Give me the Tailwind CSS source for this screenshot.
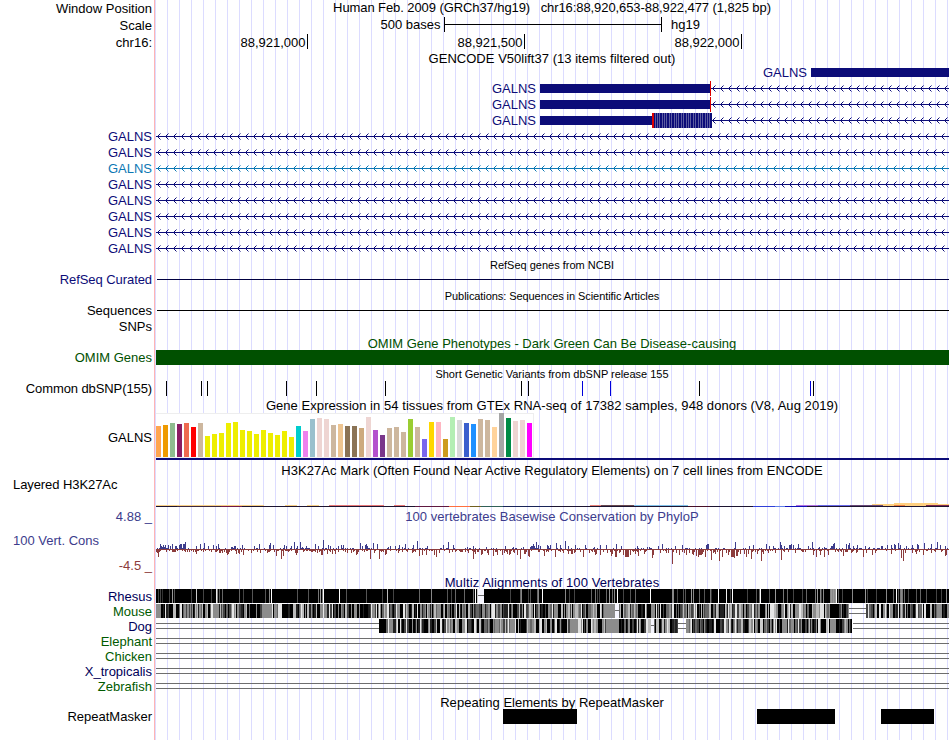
<!DOCTYPE html>
<html lang="en">
<head>
<meta charset="utf-8">
<title>chr16:88,920,653-88,922,477 - Genome Browser</title>
<meta name="viewport" content="width=device-width, initial-scale=1.0">
<script src="https://cdn.jsdelivr.net/npm/@tailwindcss/browser@4"></script>
<script>
const NAVY = "#0c0c78";
const LEFT = 156;
const RIGHT = 949;

// GTEx tissues: [colour, bar height]
const tissues = [
  ["#ffa54f", 31], ["#ee9a00", 32], ["#8fbc8f", 34], ["#8b1c62", 33], ["#ee6a50", 34], ["#ff0000", 30],
  ["#cdb79e", 34], ["#eeee00", 21], ["#eeee00", 23], ["#eeee00", 24], ["#eeee00", 34], ["#eeee00", 35],
  ["#eeee00", 27], ["#eeee00", 26], ["#eeee00", 23], ["#eeee00", 27], ["#eeee00", 24], ["#eeee00", 22],
  ["#eeee00", 26], ["#eeee00", 20], ["#00cdcd", 31], ["#ee82ee", 26], ["#9ac0cd", 38], ["#eed5d2", 39],
  ["#eed5d2", 38], ["#cdb79e", 32], ["#eec591", 33], ["#8b7355", 31], ["#8b7355", 31], ["#cdaa7d", 29],
  ["#eed5d2", 40], ["#b452cd", 27], ["#7a378b", 22], ["#cdb79e", 29], ["#cdb79e", 30], ["#cdb79e", 25],
  ["#9acd32", 38], ["#cdb79e", 30], ["#7a67ee", 18], ["#ffd700", 35], ["#ffb6c1", 35], ["#cd9b1d", 18],
  ["#b4eeb4", 40], ["#d9d9d9", 37], ["#3a5fcd", 34], ["#1e90ff", 33], ["#cdb79e", 38], ["#cdb79e", 37],
  ["#ffd39b", 30], ["#a6a6a6", 44], ["#008b45", 39], ["#eed5d2", 36], ["#eed5d2", 37], ["#ff00ff", 34],
];

// Layered H3K27Ac: [start, end, row, colour]
const h3k27ac = [
  [156, 949, 506, "#1c1430"], [177, 221, 506, "#3c2840"], [221, 242, 506, "#701848"],
  [156, 264, 505, "#f8d088"], [285, 297, 505, "#f8d088"], [307, 319, 505, "#f8d088"],
  [329, 384, 505, "#e87878"], [394, 405, 505, "#e87878"], [415, 449, 506, "#601840"],
  [449, 470, 506, "#ff7040"], [470, 481, 506, "#706020"], [481, 503, 506, "#306058"],
  [503, 550, 506, "#182458"], [590, 601, 505, "#e88078"], [601, 634, 505, "#684850"],
  [634, 688, 505, "#80c0e8"], [688, 710, 506, "#481028"], [753, 775, 506, "#3040d8"],
  [775, 785, 506, "#6080e8"], [785, 807, 506, "#1010b8"], [796, 818, 505, "#b070e0"],
  [818, 850, 505, "#6868e8"], [850, 883, 505, "#684878"], [872, 949, 504, "#ffd080"],
  [883, 949, 505, "#ffd080"], [894, 938, 503, "#ffd080"], [894, 905, 505, "#f08040"],
  [926, 949, 505, "#802850"],
];

// PhyloP scores per tile: offsets are in thirds of a pixel, then the bar height
const phylop = [
  { start: 140,
    up: "61:5 64:3 67:2 70:4 73:2 76:4 85:4 91:3 97:5 106:3 109:3 118:4 121:5 124:5 130:5 133:5 136:7 169:3 181:5 193:6 205:3 220:4 229:3 235:5 274:2 277:2 283:3 286:3 307:4 343:3 358:5 388:4 391:6 400:4 433:4 439:3 454:3 463:7 472:3 481:7 487:2 499:3 526:5 535:3 550:9 565:4 571:3 595:3 604:4 610:4 661:6 667:3 676:4 679:5 682:3 700:6 712:5 745:2 751:3 766:3 778:4 787:2 796:5",
    down: "52:4 55:8 58:3 79:3 88:2 103:3 112:2 127:2 142:3 148:3 154:2 160:3 169:5 175:2 190:3 208:2 214:3 226:3 239:4 242:4 247:4 253:3 259:4 262:6 265:5 268:3 289:5 295:4 298:5 304:3 310:6 325:2 334:4 352:3 361:4 382:4 388:3 409:7 424:10 430:7 445:3 454:2 466:4 469:6 472:4 490:3 502:2 508:2 514:3 532:4 538:3 544:6 547:6 562:5 571:3 577:5 586:5 595:3 616:3 622:4 634:4 640:3 649:6 652:5 655:3 673:3 691:10 703:4 718:10 724:3 736:6 739:5 775:4 787:3 802:3" },
  { start: 410,
    up: "10:4 22:8 52:3 100:4 115:7 130:4 172:2 190:3 229:2 286:3 310:2 340:2 361:2 364:3 367:3 370:5 373:3 379:7 385:4 391:3 412:4 415:3 421:4 439:6 451:4 466:8 475:3 496:4 526:4 553:2 571:4 589:4 619:5 634:3 682:3 712:2 718:2 745:3 757:5 796:3",
    down: "7:4 28:7 37:6 49:6 58:2 73:6 79:8 88:4 118:4 136:3 154:3 166:3 175:4 190:10 196:5 214:6 217:5 232:4 235:6 250:7 259:3 262:6 277:6 283:4 292:5 298:6 301:5 313:4 322:6 331:10 343:5 346:5 355:7 358:8 388:3 403:7 436:8 451:3 460:4 475:5 484:5 487:5 493:4 520:8 538:4 547:3 556:6 559:5 571:6 580:3 592:4 604:7 607:5 616:8 620:8 628:4 640:6 646:8 649:8 652:8 655:8 661:6 676:5 685:7 703:5 727:9 730:6 751:4 769:4 775:4 787:15 799:4 808:6" },
  { start: 680,
    up: "7:4 79:4 82:5 85:5 166:7 208:3 220:4 259:5 268:3 280:3 301:7 304:4 313:3 328:4 331:4 334:5 340:4 355:5 385:3 397:7 418:2 433:2 454:3 457:3 460:5 463:6 499:5 505:4 508:6 520:3 532:4 556:3 568:2 604:3 607:3 622:4 634:4 643:5 646:4 655:6 661:4 679:3 697:4 712:5 715:4 733:6 754:5 772:7 781:4 796:3",
    down: "7:3 13:4 19:6 28:4 37:5 40:6 49:7 55:8 58:6 61:6 64:6 67:5 76:8 94:11 100:4 106:5 118:12 127:8 139:4 145:6 154:8 157:8 160:8 163:9 169:7 172:7 181:5 193:5 199:8 205:5 214:10 232:5 244:12 250:5 265:4 286:4 304:11 325:3 346:4 400:6 409:8 421:6 433:8 445:6 490:7 502:3 514:4 529:4 550:8 559:4 577:6 586:4 619:2 634:5 664:9 670:12 676:4 697:4 709:5 730:6 754:4 766:3 784:3 796:7 799:6" },
];

// Rhesus is nearly all identity (black); these are the paler columns, one hex digit of grey each
const rhesus = [
  { start: 140, cols: "55:4 60:4 66:3 88:4 97:9 103:5 154:4 168:c 190:4 215:4 229:e 232:8 238:5 246:6 298:6 310:4 337:5 376:5 388:8 394:f 472:5 505:5 535:7 541:9 547:7 550:f 598:f 619:5 679:5 728:4 742:b 760:4" },
  { start: 410, cols: "28:6 64:8 112:5 124:4 136:6 163:6 190:7 195:f 202:c 302:4 330:6 334:8 355:4 360:5 381:6 386:8 397:f 465:8 478:4 493:4 545:6 555:7 561:4 568:4 590:6 597:9 606:6 612:8 622:f 640:4 660:5 676:6 721:f 787:8 790:8 803:4" },
  { start: 680, cols: "10:5 15:5 34:9 40:8 57:6 73:5 91:7 95:3 115:f 139:e 150:4 157:f 202:4 228:5 237:6 240:f 268:5 285:9 310:7 322:6 340:4 366:4 378:6 405:7 411:9 420:8 425:4 430:8 451:8 454:9 457:8 460:9 463:8 466:9 470:f 475:6 487:4 517:8 557:9 563:4 590:4 618:8 640:6 648:f 655:5 660:7 663:8 666:7 672:6 685:4 708:5 722:6 740:5 770:4 785:4 800:8" },
];

function rect(x, y, w, h, fill) {
    return `<rect x="${x}" y="${y}" width="${w}" height="${h}" fill="${fill}"/>`;
}

function text(x, y, str, fill = "#000", anchor = "end") {
    return `<text x="${x}" y="${y}" fill="${fill}" text-anchor="${anchor}">${str}</text>`;
}

// Small repeatable generator so the dense alignment columns look the same on every load
function makeRandom(seed) {
    return () => {
        seed = (seed * 1103515245 + 12345) % 2147483648;
        return seed / 2147483648;
    };
}

function pairs(str) {
    return str.split(" ").map(p => p.split(":"));
}

// Intron line with chevrons pointing to the minus strand
function intron(from, color = NAVY) {
    let d = "";
    let tips = "";
    for (let x = from; x < RIGHT; x += 8) {
        d += `M${x + 2} 7h1v1h-1zM${x + 2} 9h1v1h-1zM${x + 3} 6h1v1h-1zM${x + 3} 10h1v1h-1z`;
        tips += `M${x + 4} 5h1v1h-1zM${x + 4} 11h1v1h-1z`;
    }
    return rect(from, 8, RIGHT - from, 1, color) + `<path d="${d}" fill="${color}"/><path d="${tips}" fill="${color}" opacity="0.5"/>`;
}

function doubleLine(from = LEFT, to = RIGHT) {
    return rect(from, 4, to - from, 1, "#6e6e6e") + rect(from, 9, to - from, 1, "#6e6e6e");
}

function columns(from, to, seed, dark) {
    const random = makeRandom(seed);
    const greys = ["#222", "#444", "#666", "#8c8c8c", "#8c8c8c", "#bbb", "#e6e6e6"];
    let out = rect(from, 0, to - from, 14, "#000");
    let x = from;
    while (x < to) {
        const w = Math.min(random() < 0.7 ? 1 : 2, to - x);
        if (random() > dark) {
            out += rect(x, 0, w, 14, greys[Math.floor(random() * greys.length)]);
        }
        x += w;
    }
    return out;
}

function gap(from, to) {
    return rect(from, 0, to - from, 14, "#f6f6ff") + rect(from, 6, to - from, 1, "#6e6e6e");
}

const draw = {
    scale: () => rect(444, 7, 218, 1, "#000") + rect(444, 0, 1, 15, "#000") + rect(661, 0, 1, 15, "#000")
        + text(440.5, 12, "500 bases") + text(671, 12, "hg19", "#000", "start"),
    ruler: () => [[307, "88,921,000"], [524, "88,921,500"], [741, "88,922,000"]].map(([x, label]) =>
        rect(x, 0, 1, 15, "#000") + text(x - 1.5, 13, label)).join(""),
    gene1: () => text(807, 13, "GALNS", NAVY) + rect(811, 4, 138, 9, NAVY),
    gene2: () => text(536, 13, "GALNS", NAVY) + rect(540, 4, 170, 9, NAVY) + intron(711) + rect(710, 1, 1, 15, "#dc0000"),
    gene3: () => {
        let out = text(536, 13, "GALNS", NAVY) + rect(540, 4, 113, 9, NAVY) + intron(711);
        out += rect(652, 1, 60, 15, NAVY) + rect(652, 1, 2, 15, "#dc0000");
        for (const x of [655, 657, 659, 662, 664, 666, 669, 671, 674, 676, 678, 681, 683, 686, 688, 690, 693, 695, 698, 700, 702, 705, 707, 709]) {
            out += rect(x, 1, 1, 15, "#5c5ca0");
        }
        return out;
    },
    intron: () => intron(156),
    intronBlue: () => intron(156, "#0c78b4"),
    refseq: () => rect(157, 8, 792, 1, "#000040"),
    sequences: () => rect(157, 8, 792, 1, "#000"),
    omim: () => rect(156, 0, 793, 15, "#005000"),
    snps: () => [166, 201, 207, 286, 316, 385, 521, 528, 699, 813].map(x => rect(x, 0, 1, 15, "#000")).join("")
        + [582, 610, 810].map(x => rect(x, 0, 1, 15, "#0000dc")).join(""),
    gtex: () => rect(156, 0, 378, 45, "#eee") + rect(156, 1, 377, 43, "#fff")
        + tissues.map(([color, h], i) => rect(156 + i * 7, 44 - h, 5, h, color)).join("")
        + rect(156, 45, 793, 2, NAVY),
    h3k27ac: () => h3k27ac.map(([from, to, y, color]) => rect(from, y - 478, to - from, 1, color)).join(""),
    phylop: () => {
        const random = makeRandom(41);
        let out = rect(156, 25, 793, 1, "#8c3c3c");
        for (let x = 156; x < RIGHT; x++) {
            const r = random();
            if (r < 0.28) {
                out += rect(x, 25, 1, r < 0.1 ? 3 : 2, "#8c3c3c");
            } else if (r > 0.78) {
                out += rect(x, 24, 1, 1, "#3c3c8c");
            }
        }
        for (const tile of phylop) {
            for (const [x, h] of pairs(tile.up)) {
                out += rect(tile.start + Math.floor(x / 3), 25 - h, 1, h, "#3c3c8c");
            }
            for (const [x, h] of pairs(tile.down)) {
                out += rect(tile.start + Math.floor(x / 3), 25, 1, h, "#8c3c3c");
            }
        }
        return out;
    },
    rhesus: () => {
        let out = rect(156, 0, 793, 14, "#000");
        for (const tile of rhesus) {
            for (const [x, g] of pairs(tile.cols)) {
                out += rect(tile.start + Math.floor(x / 3), 0, 1, 14, `#${g}${g}${g}`);
            }
        }
        return out + gap(478, 484);
    },
    mouse: () => columns(156, 849, 7, 0.26) + rect(158, 0, 3, 14, "#8c8c8c") + rect(213, 0, 6, 14, "#8c8c8c")
        + rect(263, 0, 9, 14, "#8c8c8c") + rect(320, 0, 3, 14, "#8c8c8c") + rect(606, 0, 9, 14, "#8c8c8c")
        + gap(615, 619) + rect(820, 0, 4, 14, "#e0e0e0") + rect(831, 0, 6, 14, "#000")
        + doubleLine(849, 866) + columns(866, 949, 23, 0.32),
    dog: () => doubleLine(156, 379) + columns(379, 678, 99, 0.3) + rect(379, 0, 7, 14, "#000")
        + rect(572, 0, 6, 14, "#8c8c8c") + rect(578, 0, 3, 14, "#e0e0e0") + rect(606, 0, 13, 14, "#8c8c8c")
        + rect(619, 0, 2, 14, "#000") + gap(651, 654) + doubleLine(678, 686) + columns(686, 852, 57, 0.32)
        + rect(760, 0, 3, 14, "#ccc") + rect(830, 0, 6, 14, "#8c8c8c") + doubleLine(853, 949),
    unaligned: () => doubleLine(),
    repeats: () => rect(503, 0, 74, 15, "#000") + rect(757, 0, 78, 15, "#000") + rect(881, 0, 53, 15, "#000"),
};

addEventListener("DOMContentLoaded", () => {
    document.querySelectorAll("svg[data-track]").forEach((svg) => {
        const height = svg.dataset.height;
        svg.setAttribute("width", 794);
        svg.setAttribute("height", height);
        svg.setAttribute("viewBox", `155 0 794 ${height}`);
        svg.setAttribute("shape-rendering", "crispEdges");
        svg.innerHTML = draw[svg.dataset.track]();
    });
});
</script>
</head>
<body class="bg-white">
<main class="h-[740px] w-[949px] overflow-hidden bg-[linear-gradient(to_right,#fff_154px,#ffb4b4_154px,#ffb4b4_155px,transparent_155px),repeating-linear-gradient(to_right,transparent_0_11px,#dcdcff_11px_12px)] font-['Liberation_Sans',Arial,sans-serif] text-[13px] leading-[13px] text-black">
    <div class="flex h-[17px]"><div class="mr-[3px] w-[152px] pt-[2px] text-right">Window Position</div><h2 class="w-[794px] pt-px text-center tracking-[-0.085px]">Human Feb. 2009 (GRCh37/hg19)&nbsp;&nbsp; chr16:88,920,653-88,922,477 (1,825 bp)</h2></div>
    <div class="flex h-[17px]"><div class="mr-[3px] w-[152px] pt-[2px] text-right">Scale</div><svg data-track="scale" data-height="17"></svg></div>
    <div class="flex h-[17px]"><div class="mr-[3px] w-[152px] pt-[2px] text-right">chr16:</div><svg data-track="ruler" data-height="17"></svg></div>

    <h2 class="ml-[155px] h-[13px] pt-px text-center tracking-[0.03px]">GENCODE V50lift37 (13 items filtered out)</h2>
    <div class="flex h-4 pl-[155px]"><svg data-track="gene1" data-height="16"></svg></div>
    <div class="flex h-4 pl-[155px]"><svg data-track="gene2" data-height="16"></svg></div>
    <div class="flex h-4 pl-[155px]"><svg data-track="gene2" data-height="16"></svg></div>
    <div class="flex h-4 pl-[155px]"><svg data-track="gene3" data-height="16"></svg></div>
    <div class="flex h-4 text-[#0c0c78]"><div class="mr-[3px] w-[152px] pt-[2px] text-right">GALNS</div><svg data-track="intron" data-height="16"></svg></div>
    <div class="flex h-4 text-[#0c0c78]"><div class="mr-[3px] w-[152px] pt-[2px] text-right">GALNS</div><svg data-track="intron" data-height="16"></svg></div>
    <div class="flex h-4 text-[#0c78b4]"><div class="mr-[3px] w-[152px] pt-[2px] text-right">GALNS</div><svg data-track="intronBlue" data-height="16"></svg></div>
    <div class="flex h-4 text-[#0c0c78]"><div class="mr-[3px] w-[152px] pt-[2px] text-right">GALNS</div><svg data-track="intron" data-height="16"></svg></div>
    <div class="flex h-4 text-[#0c0c78]"><div class="mr-[3px] w-[152px] pt-[2px] text-right">GALNS</div><svg data-track="intron" data-height="16"></svg></div>
    <div class="flex h-4 text-[#0c0c78]"><div class="mr-[3px] w-[152px] pt-[2px] text-right">GALNS</div><svg data-track="intron" data-height="16"></svg></div>
    <div class="flex h-4 text-[#0c0c78]"><div class="mr-[3px] w-[152px] pt-[2px] text-right">GALNS</div><svg data-track="intron" data-height="16"></svg></div>
    <div class="flex h-4 text-[#0c0c78]"><div class="mr-[3px] w-[152px] pt-[2px] text-right">GALNS</div><svg data-track="intron" data-height="16"></svg></div>

    <h2 class="ml-[155px] h-[15px] pt-[3px] text-center text-[11px]">RefSeq genes from NCBI</h2>
    <div class="flex h-4"><div class="mr-[3px] w-[152px] pt-[2px] text-right tracking-[-0.07px] text-[#0c0c78]">RefSeq Curated</div><svg data-track="refseq" data-height="16"></svg></div>
    <h2 class="ml-[155px] h-[15px] pt-[3px] text-center text-[11px] tracking-[-0.07px]">Publications: Sequences in Scientific Articles</h2>
    <div class="flex h-4"><div class="mr-[3px] w-[152px] pt-[2px] text-right">Sequences</div><svg data-track="sequences" data-height="16"></svg></div>
    <div class="h-4 w-[152px] pt-[2px] text-right">SNPs</div>

    <h2 class="ml-[155px] h-4 pt-[3px] text-center text-[#005000]">OMIM Gene Phenotypes - Dark Green Can Be Disease-causing</h2>
    <div class="flex h-[15px]"><div class="mr-[3px] w-[152px] pt-px text-right text-[#005000]">OMIM Genes</div><svg data-track="omim" data-height="15"></svg></div>
    <h2 class="ml-[155px] h-4 pt-[3px] text-center text-[11px]">Short Genetic Variants from dbSNP release 155</h2>
    <div class="flex h-[15px]"><div class="mr-[3px] w-[152px] pt-px text-right tracking-[-0.1px]">Common dbSNP(155)</div><svg data-track="snps" data-height="15"></svg></div>

    <h2 class="ml-[155px] h-[17px] pt-[3px] text-center tracking-[0.055px]">Gene Expression in 54 tissues from GTEx RNA-seq of 17382 samples, 948 donors (V8, Aug 2019)</h2>
    <div class="flex h-[47px]"><div class="mr-[3px] w-[152px] pt-[18px] text-right">GALNS</div><svg data-track="gtex" data-height="47"></svg></div>

    <h2 class="ml-[155px] h-[18px] pt-1 text-center tracking-[0.045px]">H3K27Ac Mark (Often Found Near Active Regulatory Elements) on 7 cell lines from ENCODE</h2>
    <div class="flex h-8"><div class="mr-[3px] w-[152px] pl-[13px] tracking-[-0.08px]">Layered H3K27Ac</div><svg data-track="h3k27ac" data-height="32"></svg></div>

    <div class="flex h-[14px] text-[#3c3c8c]"><div class="mr-[3px] w-[152px] text-right">4.88 _</div><h2 class="w-[794px] text-center tracking-[0.03px]">100 vertebrates Basewise Conservation by PhyloP</h2></div>
    <div class="flex h-[51px]">
        <div class="mr-[3px] flex w-[152px] flex-col justify-between pt-[10px] pb-[3px]">
            <div class="pl-[13px] text-[#3c3c8c]">100 Vert. Cons</div>
            <div class="text-right text-[#8c3c3c]">-4.5 _</div>
        </div>
        <svg data-track="phylop" data-height="51"></svg>
    </div>

    <h2 class="ml-[155px] h-[14px] pt-px text-center tracking-[0.1px] text-[#00005a]">Multiz Alignments of 100 Vertebrates</h2>
    <div class="flex h-[15px]"><div class="mr-[3px] w-[152px] pt-px text-right text-[#00005a]">Rhesus</div><svg data-track="rhesus" data-height="15"></svg></div>
    <div class="flex h-[15px]"><div class="mr-[3px] w-[152px] pt-px text-right text-[#005a00]">Mouse</div><svg data-track="mouse" data-height="15"></svg></div>
    <div class="flex h-[15px]"><div class="mr-[3px] w-[152px] pt-px text-right text-[#00005a]">Dog</div><svg data-track="dog" data-height="15"></svg></div>
    <div class="flex h-[15px]"><div class="mr-[3px] w-[152px] pt-px text-right text-[#005a00]">Elephant</div><svg data-track="unaligned" data-height="15"></svg></div>
    <div class="flex h-[15px]"><div class="mr-[3px] w-[152px] pt-px text-right text-[#005a00]">Chicken</div><svg data-track="unaligned" data-height="15"></svg></div>
    <div class="flex h-[15px]"><div class="mr-[3px] w-[152px] pt-px text-right text-[#00005a]">X_tropicalis</div><svg data-track="unaligned" data-height="15"></svg></div>
    <div class="flex h-[15px]"><div class="mr-[3px] w-[152px] pt-px text-right text-[#005a00]">Zebrafish</div><svg data-track="unaligned" data-height="15"></svg></div>

    <h2 class="ml-[155px] h-[15px] pt-[2px] text-center tracking-[0.03px]">Repeating Elements by RepeatMasker</h2>
    <div class="flex h-[15px]"><div class="mr-[3px] w-[152px] pt-px text-right">RepeatMasker</div><svg data-track="repeats" data-height="15"></svg></div>
</main>
</body>
</html>
